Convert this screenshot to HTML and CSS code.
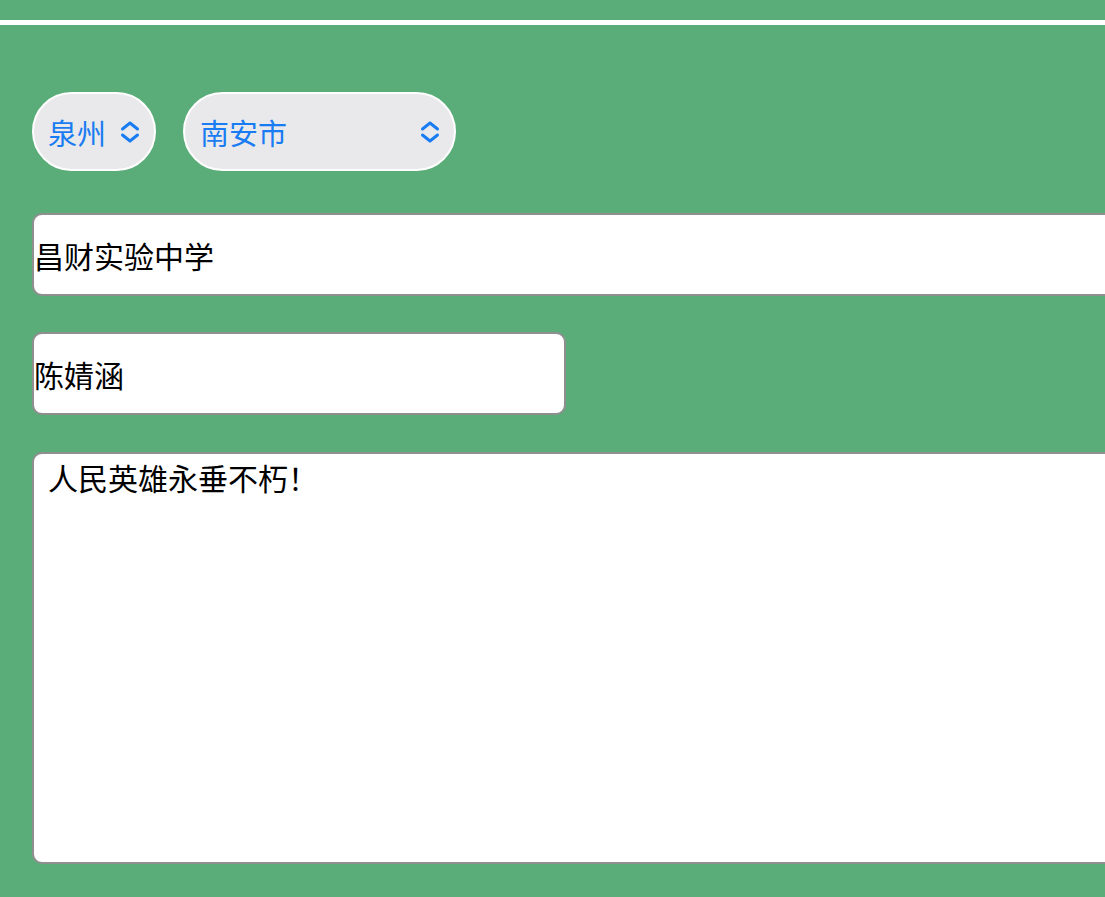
FILE: index.html
```html
<!DOCTYPE html>
<html lang="zh-CN">
  <head>
    <meta charset="UTF-8" />
    <meta name="viewport" content="width=device-width, initial-scale=1.0" />
    <title>报名表</title>
    <link rel="stylesheet" href="styles.css">
  </head>
  <body>
    <div class="topbar"></div>

    <!-- 表单 -->
    <form class="form">
      <div class="row-select">
        <label class="pill">
          <select name="city">
            <option>泉州</option>
          </select>
          <svg class="chev" viewBox="0 0 20 22" width="20" height="22">
            <path d="M2.5 8 L10 2 L17.5 8 M2.5 14 L10 20 L17.5 14" />
          </svg>
        </label>
        <label class="pill pill-wide">
          <select name="area">
            <option>南安市</option>
          </select>
          <svg class="chev" viewBox="0 0 20 22" width="20" height="22">
            <path d="M2.5 8 L10 2 L17.5 8 M2.5 14 L10 20 L17.5 14" />
          </svg>
        </label>
      </div>

      <input class="field field-wide" type="text" name="school" value="昌财实验中学" />
      <input class="field field-name" type="text" name="name" value="陈婧涵" />
      <textarea class="field field-wide field-msg" name="msg">人民英雄永垂不朽！</textarea>
    </form>
  </body>
</html>
```

FILE: styles.css
```css
/* 页面 */
html {
  overflow: hidden;
}

body {
  margin: 0;
  background-color: #5aac78;
  font-family: "Noto Sans CJK SC", "Noto Sans", sans-serif;
}

.topbar {
  height: 20px;
  border-bottom: 5px solid #fff;
}

/* 表单 */
.form {
  display: flex;
  flex-direction: column;
  align-items: flex-start;
  padding: 67px 0 0 32px;
}

.row-select {
  display: flex;
  gap: 27px;
}

.pill {
  display: flex;
  align-items: center;
  box-sizing: border-box;
  height: 79px;
  width: 124px;
  padding: 0 14px 0 14px;
  background-color: #e9e9eb;
  border: 2px solid #fff;
  border-radius: 40px;
}

.pill-wide {
  width: 273px;
  padding-left: 15px;
}

.pill select {
  flex: 1;
  min-width: 0;
  appearance: none;
  -webkit-appearance: none;
  background: transparent;
  border: none;
  padding: 0;
  font-family: inherit;
  font-size: 29px;
  color: #1a7cf2;
  outline: none;
}

.chev {
  flex: none;
  fill: none;
  stroke: #1a7cf2;
  stroke-width: 3;
  stroke-linecap: round;
  stroke-linejoin: round;
}

.field {
  box-sizing: border-box;
  font-family: inherit;
  font-size: 30px;
  color: #000;
  background-color: #fff;
  border: 2px solid #8f8f8f;
  border-radius: 10px;
  outline: none;
}

/* 右边被屏幕截断 */
.field-wide {
  align-self: stretch;
  border-right: none;
  border-radius: 10px 0 0 10px;
}

input.field {
  margin-top: 36px;
  height: 83px;
  padding: 0;
}

input.field-wide {
  margin-top: 42px;
}

.field-name {
  width: 534px;
}

.field-msg {
  margin-top: 37px;
  height: 412px;
  padding: 5px 14px;
  line-height: 1.2;
  resize: none;
}
```
